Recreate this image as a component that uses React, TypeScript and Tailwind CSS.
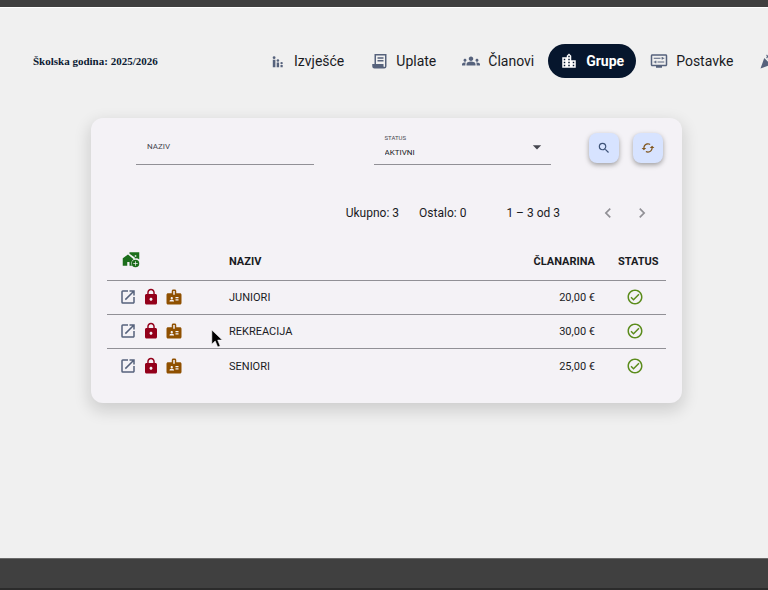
import { useState } from 'react';
import {
  MdArrowDropDown,
  MdBadge,
  MdCached,
  MdCelebration,
  MdChevronLeft,
  MdChevronRight,
  MdGroups,
  MdLocationCity,
  MdLock,
  MdOpenInNew,
  MdOutlineCheckCircle,
  MdSearch,
} from 'react-icons/md';

interface Group {
  id: number;
  name: string;
  fee: string;
}

const groups: Group[] = [
  { id: 1, name: 'JUNIORI', fee: '20,00 €' },
  { id: 2, name: 'REKREACIJA', fee: '30,00 €' },
  { id: 3, name: 'SENIORI', fee: '25,00 €' },
];

const ReportIcon = () => (
  <svg viewBox="0 0 18 18" className="size-[18px]" fill="currentColor">
    <circle cx="6.1" cy="5.7" r="1.4" />
    <circle cx="9.9" cy="8.5" r="1.3" />
    <circle cx="13.6" cy="11.1" r="1.2" />
    <path d="M4.8 7.700h2.600v7.500H4.800zM8.700 10.500h2.400v4.700H8.700zM12.500 13h2.200v2.200h-2.200z" />
  </svg>
);

const ReceiptIcon = () => (
  <svg viewBox="0 0 24 24" className="size-[18px]" fill="currentColor">
    <path d="M6 2.500h16V19a3 3 0 0 1-3 3H6a3 3 0 0 1-3-3v-3h3zM8 4.500V16h10v3a1 1 0 0 0 2 0V4.500z" />
    <path d="M10 7h8v2h-8zM10 10.500h8v2h-8z" />
  </svg>
);

const SettingsIcon = () => (
  <svg viewBox="0 0 24 24" className="size-[18px]" fill="currentColor">
    <path d="M21 3H3c-1.100 0-2 .9-2 2v12c0 1.100.9 2 2 2h5v2h8v-2h5c1.100 0 2-.9 2-2V5c0-1.100-.9-2-2-2zm0 14H3V5h18v12z" />
    <path d="M5 7.500h9v1.600H5zM15.500 6.500H17v1h2v1.600h-2v1h-1.500zM10 12.500h9v1.600h-9zM7 11.500h1.500v3.600H7v-1H5v-1.600h2z" />
  </svg>
);

const AddHomeIcon = () => (
  <svg viewBox="0 0 24 24" className="size-[18px]" fill="currentColor">
    <path d="M1 11v10h6v-5h3v5h3.200a7 7 0 0 1 2.300-8.700L8 6z" />
    <path d="M10 3v2l7 5v1.300a7 7 0 0 1 6 1.200V3H10zm9 6h-2V7h2v2z" />
    <path d="M18 13a5 5 0 1 0 0 10 5 5 0 0 0 0-10zm3 5.500h-2.500V21h-1v-2.500H15v-1h2.500V15h1v2.500H21v1z" />
  </svg>
);

const navItems = [
  { label: 'Izvješće', icon: <ReportIcon /> },
  { label: 'Uplate', icon: <ReceiptIcon /> },
  { label: 'Članovi', icon: <MdGroups size={18} /> },
  { label: 'Grupe', icon: <MdLocationCity size={18} />, active: true },
  { label: 'Postavke', icon: <SettingsIcon /> },
  { icon: <MdCelebration size={18} /> },
];

const App = () => {
  const [name, setName] = useState('');
  const [status, setStatus] = useState('AKTIVNI');

  return (
    <div className="relative flex min-h-screen flex-col overflow-hidden bg-[#f0f0f0] font-['Roboto',sans-serif] text-[#1a1b1f]">
      <div className="h-2 border-b border-white bg-[#404040]" />

      <header className="flex items-center pt-9 pl-[33px]">
        <span className="w-[223px] shrink-0 font-['Liberation_Serif',serif] text-[11px] font-bold text-[#0b1a33]">
          Školska godina: 2025/2026
        </span>
        <nav className="flex shrink-0 gap-0.5">
          {navItems.map((item, i) => (
            <a
              key={i}
              href="#"
              className={
                item.active
                  ? 'flex h-[34px] items-center gap-2 rounded-full bg-[#06162d] px-3 text-sm font-bold text-white'
                  : 'flex h-[34px] items-center gap-2 rounded-full px-3 text-sm text-[#1a1b1f] [&>svg]:text-[#56627c]'
              }
            >
              {item.icon}
              {item.label}
            </a>
          ))}
        </nav>
      </header>

      <main className="mt-10 mr-[86px] mb-auto ml-[91px] rounded-xl bg-[#f4f2f6] px-4 pb-5 shadow-[0_6px_16px_2px_rgba(0,0,0,0.14)]">
        <form className="flex items-center pt-3 pr-[3px] pl-[29px]" onSubmit={e => e.preventDefault()}>
          <div className="grid flex-1 grid-cols-2 gap-[60px]">
            <div className="flex h-[35px] items-center border-b border-[#919096] px-[11px]">
              <input
                aria-label="Naziv"
                placeholder="NAZIV"
                value={name}
                onChange={e => setName(e.target.value)}
                className="w-full bg-transparent text-[8px] outline-none placeholder:text-[#45464f]"
              />
            </div>
            <div className="flex h-[35px] items-center border-b border-[#919096] pr-1 pl-[11px]">
              <div className="flex flex-1 flex-col gap-[3px]">
                <label htmlFor="status" className="text-[6px] leading-2 text-[#45464f]">
                  STATUS
                </label>
                <select
                  id="status"
                  value={status}
                  onChange={e => setStatus(e.target.value)}
                  className="h-4 w-full appearance-none bg-transparent text-[8px] outline-none"
                >
                  <option>AKTIVNI</option>
                </select>
              </div>
              <MdArrowDropDown size={20} className="text-[#45464f]" />
            </div>
          </div>
          <div className="ml-[38px] flex gap-[14px]">
            <button
              aria-label="Traži"
              className="flex size-[30px] items-center justify-center rounded-lg bg-[#d7e3ff] text-[#3e5378] shadow-[0_2px_5px_rgba(0,0,0,0.35)]"
            >
              <MdSearch size={14} />
            </button>
            <button
              type="button"
              aria-label="Osvježi"
              className="flex size-[30px] items-center justify-center rounded-lg bg-[#d7e3ff] text-[#80551c] shadow-[0_2px_5px_rgba(0,0,0,0.35)]"
            >
              <MdCached size={14} />
            </button>
          </div>
        </form>

        <div className="mt-8 mb-[13px] flex h-8 items-center justify-end pr-[14px] text-xs">
          <span className="mr-5">Ukupno: 3</span>
          <span className="mr-10">Ostalo: 0</span>
          <span className="mr-[38px]">1 – 3 od 3</span>
          <div className="flex gap-[14px] text-[#919096]">
            <button aria-label="Prethodna stranica">
              <MdChevronLeft size={20} />
            </button>
            <button aria-label="Sljedeća stranica">
              <MdChevronRight size={20} />
            </button>
          </div>
        </div>

        <table className="w-full table-fixed border-collapse text-[11px]">
          <thead>
            <tr className="h-[38px] border-b border-[#919096]">
              <th className="w-[122px] pl-[15px] text-left">
                <button aria-label="Nova grupa" className="block pb-1 text-[#1b6e1b]">
                  <AddHomeIcon />
                </button>
              </th>
              <th className="pt-0.5 text-left">NAZIV</th>
              <th className="w-[80px] pt-0.5 text-right">ČLANARINA</th>
              <th className="w-[71px] pt-0.5 pl-[23px] text-left">STATUS</th>
            </tr>
          </thead>
          <tbody>
            {groups.map(group => (
              <tr key={group.id} className="h-[34px] border-b border-[#919096] last:h-[35px] last:border-b-0">
                <td className="pl-3">
                  <div className="flex gap-[5px]">
                    <button aria-label="Otvori" className="text-[#56627c]">
                      <MdOpenInNew size={18} />
                    </button>
                    <button aria-label="Zaključaj" className="text-[#93001a]">
                      <MdLock size={18} />
                    </button>
                    <button aria-label="Iskaznica" className="text-[#8f5000]">
                      <MdBadge size={18} />
                    </button>
                  </div>
                </td>
                <td className="pt-0.5">{group.name}</td>
                <td className="pt-0.5 text-right">{group.fee}</td>
                <td className="pl-[31px] text-[#5b8c1c]">
                  <MdOutlineCheckCircle size={18} />
                </td>
              </tr>
            ))}
          </tbody>
        </table>
      </main>

      <footer className="h-8 border-t border-b-2 border-t-[#6a6a6a] border-b-[#2b2b2b] bg-[#404040]" />

      {/* mouse pointer */}
      <svg
        viewBox="0 0 12 19"
        className="pointer-events-none absolute top-[329px] left-[211px] h-[19px] w-3"
      >
        <path d="M.8 1v14.200l3.400-3.200 2.500 6 2.500-1-2.500-5.900h4.600z" fill="#000" stroke="#fff" strokeWidth="0.6" />
      </svg>
    </div>
  );
};

export default App;
